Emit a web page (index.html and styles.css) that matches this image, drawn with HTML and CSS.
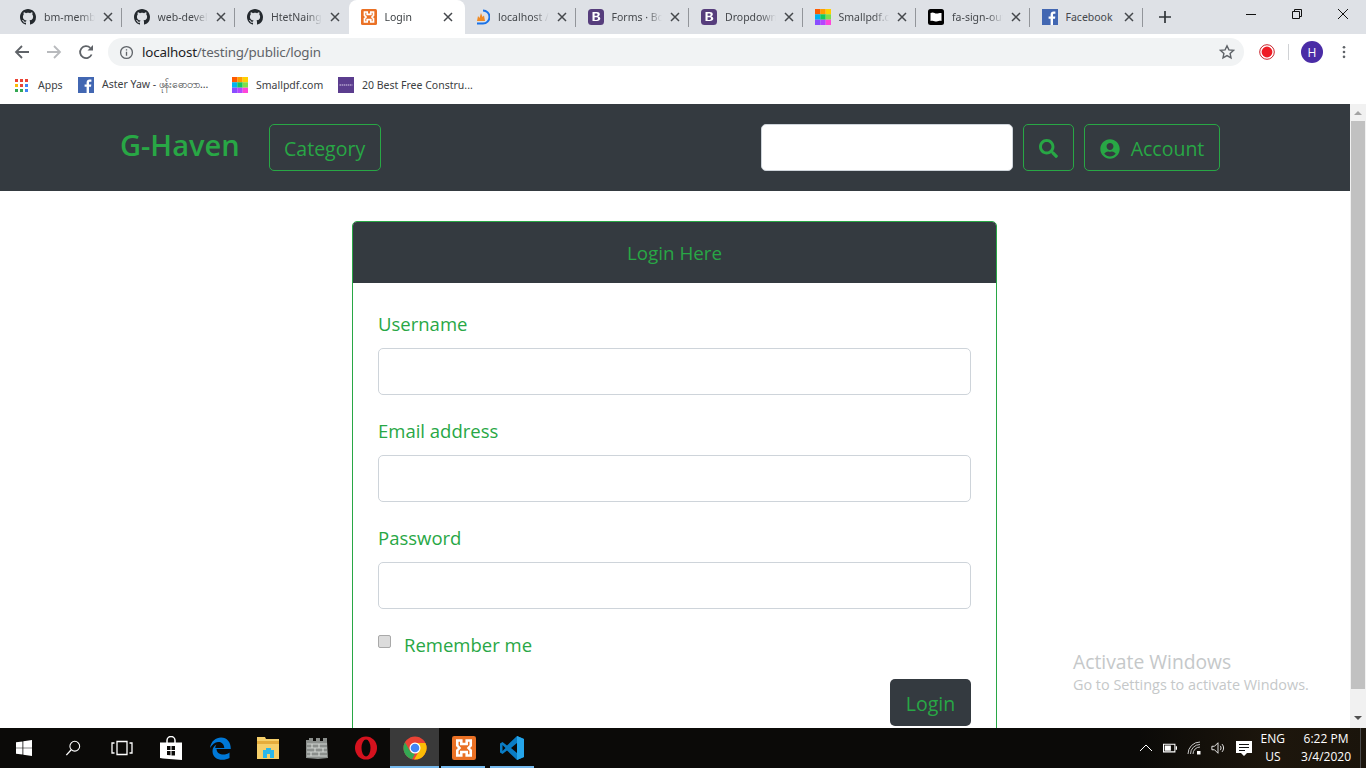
FILE: index.html
```html
<!DOCTYPE html>
<html lang="en">
<head>
<meta charset="utf-8">
<title>Login</title>
<link rel="stylesheet" href="styles.css">
</head>
<body>
<svg class="defs" width="0" height="0" aria-hidden="true">
  <defs>
    <symbol id="gh" viewBox="0 0 16 16"><path fill="#24292e" d="M8 0C3.58 0 0 3.58 0 8c0 3.54 2.29 6.53 5.47 7.59.4.07.55-.17.55-.38 0-.19-.01-.82-.01-1.49-2.01.37-2.53-.49-2.69-.94-.09-.23-.48-.94-.82-1.13-.28-.15-.68-.52-.01-.53.63-.01 1.08.58 1.23.82.72 1.21 1.87.87 2.33.66.07-.52.28-.87.51-1.07-1.78-.2-3.64-.89-3.64-3.95 0-.87.31-1.59.82-2.15-.08-.2-.36-1.02.08-2.12 0 0 .67-.21 2.2.82.64-.18 1.32-.27 2-.27.68 0 1.36.09 2 .27 1.53-1.04 2.2-.82 2.2-.82.44 1.1.16 1.92.08 2.12.51.56.82 1.27.82 2.15 0 3.07-1.87 3.75-3.65 3.95.29.25.54.73.54 1.48 0 1.07-.01 1.93-.01 2.2 0 .21.15.46.55.38A8.013 8.013 0 0016 8c0-4.42-3.58-8-8-8z"/></symbol>
    <symbol id="xampp" viewBox="0 0 16 16"><rect width="16" height="16" rx="1.500" fill="#ea7125"/><path fill="none" stroke="#fff" stroke-width="1.700" d="M3.500 3H6.200v2.300h3.600V3h2.700v3.400L11 8l1.500 1.600V13H9.800v-2.300H6.200V13H3.500V9.600L5 8 3.500 6.400z"/></symbol>
    <symbol id="boot" viewBox="0 0 16 16"><rect width="16" height="16" rx="3.500" fill="#563d7c"/><path fill="#fff" fill-rule="evenodd" d="M4.500 3h4.300c1.900 0 3 .9 3 2.300 0 1-.6 1.800-1.500 2v.1c1.200.2 2 1 2 2.200 0 1.600-1.300 2.500-3.300 2.500H4.500zm2.100 1.600v2.200h1.500c.9 0 1.500-.4 1.500-1.100s-.5-1.100-1.300-1.100zm0 3.700v2.600h1.800c1 0 1.600-.5 1.600-1.300s-.6-1.300-1.700-1.300z"/></symbol>
    <symbol id="pdf" viewBox="0 0 16 16"><rect width="5.400" height="5.400" fill="#ff5a00"/><rect x="5.300" width="5.400" height="5.400" fill="#ff9c00"/><rect x="10.700" width="5.300" height="5.400" fill="#ffd000"/><rect y="5.300" width="5.400" height="5.400" fill="#00b4f0"/><rect x="5.300" y="5.300" width="5.400" height="5.400" fill="#12c95e"/><rect x="10.700" y="5.300" width="5.300" height="5.400" fill="#7fe04a"/><rect y="10.700" width="5.400" height="5.300" fill="#8a4dff"/><rect x="5.300" y="10.700" width="5.400" height="5.300" fill="#b446ff"/><rect x="10.700" y="10.700" width="5.300" height="5.300" fill="#ff45d8"/></symbol>
    <symbol id="fb" viewBox="0 0 16 16"><rect width="16" height="16" fill="#4267b2"/><path fill="#fff" d="M11 16V9.800h2l.3-2.400H11V5.900c0-.7.200-1.200 1.200-1.200h1.200V2.600c-.2 0-1-.1-1.800-.1-1.800 0-3 1.100-3 3.100v1.800h-2v2.400h2V16z"/></symbol>
    <symbol id="x" viewBox="0 0 10 10"><path stroke="#45484c" stroke-width="1.500" d="M1 1l8 8M9 1L1 9"/></symbol>
  </defs>
</svg>

<div class="screen">
  <header class="tabstrip">
    <div class="tab"><svg class="fav"><use href="#gh"/></svg><span class="tab-title">bm-member</span><svg class="tab-x"><use href="#x"/></svg></div>
    <div class="tab"><svg class="fav"><use href="#gh"/></svg><span class="tab-title">web-develop</span><svg class="tab-x"><use href="#x"/></svg></div>
    <div class="tab tab-pre"><svg class="fav"><use href="#gh"/></svg><span class="tab-title">HtetNaingWin</span><svg class="tab-x"><use href="#x"/></svg></div>
    <div class="tab tab-active"><svg class="fav"><use href="#xampp"/></svg><span class="tab-title">Login</span><svg class="tab-x"><use href="#x"/></svg></div>
    <div class="tab"><svg class="fav" viewBox="0 0 16 16"><path fill="none" stroke="#1a73e8" stroke-width="2" d="M9 1.500a6.500 6.500 0 0 1 0 13H3"/><path fill="#f08a24" d="M3 12l1-5 1.500 2L7 4l1.500 4L10 6.500 11 12z"/></svg><span class="tab-title">localhost / 127</span><svg class="tab-x"><use href="#x"/></svg></div>
    <div class="tab"><svg class="fav"><use href="#boot"/></svg><span class="tab-title">Forms · Boot</span><svg class="tab-x"><use href="#x"/></svg></div>
    <div class="tab"><svg class="fav"><use href="#boot"/></svg><span class="tab-title">Dropdowns</span><svg class="tab-x"><use href="#x"/></svg></div>
    <div class="tab"><svg class="fav"><use href="#pdf"/></svg><span class="tab-title">Smallpdf.com</span><svg class="tab-x"><use href="#x"/></svg></div>
    <div class="tab"><svg class="fav" viewBox="0 0 16 16"><rect width="16" height="16" rx="2.500" fill="#000"/><path fill="#fff" d="M2.500 4c3-1.500 4 .5 6 .5s3-.7 5-.5v8c-2-.5-3 .5-5 .5s-3-1.500-6-.5z"/></svg><span class="tab-title">fa-sign-out-alt</span><svg class="tab-x"><use href="#x"/></svg></div>
    <div class="tab tab-last"><svg class="fav"><use href="#fb"/></svg><span class="tab-title tab-title-full">Facebook</span><svg class="tab-x"><use href="#x"/></svg></div>
    <svg class="newtab" viewBox="0 0 12 12"><path stroke="#303438" stroke-width="1.700" d="M6 0v12M0 6h12"/></svg>
    <div class="winctl">
      <svg class="win-ico" viewBox="0 0 10 10"><path stroke="#111" d="M0 5.500h10"/></svg>
      <svg class="win-ico" viewBox="0 0 10 10"><path fill="none" stroke="#111" d="M.5 2.500h7v7h-7zM2.500 2.500v-2h7v7h-2"/></svg>
      <svg class="win-ico" viewBox="0 0 10 10"><path stroke="#111" d="M0 0l10 10M10 0L0 10"/></svg>
    </div>
  </header>

  <div class="toolbar">
    <svg class="tb-ico" viewBox="0 0 16 16"><path fill="none" stroke="#5f6368" stroke-width="1.800" d="M15 8H2M8 2L2 8l6 6"/></svg>
    <svg class="tb-ico" viewBox="0 0 16 16"><path fill="none" stroke="#b8babd" stroke-width="1.800" d="M1 8h13M8 2l6 6-6 6"/></svg>
    <svg class="tb-ico" viewBox="0 0 16 16"><path fill="none" stroke="#5f6368" stroke-width="1.800" d="M13.600 10.500A6 6 0 1 1 12.300 3.800"/><path fill="#5f6368" d="M9.500 6.500H15V1z"/></svg>
    <div class="omnibox">
      <svg class="info" viewBox="0 0 16 16"><circle cx="8" cy="8" r="6.300" fill="none" stroke="#5f6368" stroke-width="1.400"/><path fill="#5f6368" d="M7.300 7.200h1.400v4.300H7.300zM7.300 4.500h1.400v1.400H7.300z"/></svg>
      <span class="url"><span class="url-host">localhost</span>/testing/public/login</span>
      <svg class="star" viewBox="0 0 16 16"><path fill="none" stroke="#5f6368" stroke-width="1.400" d="M8 1.800l1.900 4.100 4.500.5-3.300 3 .9 4.500L8 11.600l-4 2.300.9-4.500-3.300-3 4.500-.5z"/></svg>
    </div>
    <svg class="rec" viewBox="0 0 16 16"><circle cx="8" cy="8" r="7.300" fill="none" stroke="#c9252d" stroke-width="1"/><circle cx="8" cy="8" r="5.400" fill="#ee1c25"/></svg>
    <span class="tb-sep"></span>
    <span class="avatar">H</span>
    <svg class="kebab" viewBox="0 0 4 16"><circle cx="2" cy="2.500" r="1.500" fill="#5f6368"/><circle cx="2" cy="8" r="1.500" fill="#5f6368"/><circle cx="2" cy="13.500" r="1.500" fill="#5f6368"/></svg>
  </div>

  <div class="bookmarks">
    <span class="bm bm-apps"><svg class="bm-grid" viewBox="0 0 13 13"><g fill="#ea4335"><rect width="3" height="3"/><rect x="5" width="3" height="3"/><rect x="10" width="3" height="3"/></g><g fill="#fbbc05"><rect y="5" width="3" height="3"/></g><rect x="5" y="5" width="3" height="3" fill="#ea4335"/><rect x="10" y="5" width="3" height="3" fill="#4285f4"/><g fill="#34a853"><rect y="10" width="3" height="3"/><rect x="5" y="10" width="3" height="3"/></g><rect x="10" y="10" width="3" height="3" fill="#4285f4"/></svg>Apps</span>
    <span class="bm bm-aster"><svg class="fav"><use href="#fb"/></svg>Aster Yaw - ဖုန်းဓောတာ...</span>
    <span class="bm bm-pdf"><svg class="fav"><use href="#pdf"/></svg>Smallpdf.com</span>
    <span class="bm"><svg class="fav" viewBox="0 0 16 16"><rect width="16" height="16" fill="#5b3d8e"/><path stroke="#d9cdea" stroke-width="1.200" stroke-dasharray="1.500 .6" d="M1.500 8h13"/></svg>20 Best Free Constru...</span>
  </div>

  <div class="viewport">
    <main class="page">
      <nav class="navbar">
        <a class="brand">G-Haven</a>
        <button class="btn btn-cat" type="button">Category</button>
        <span class="nav-spacer"></span>
        <input class="nav-search" type="text">
        <button class="btn btn-search" type="button" aria-label="Search"><svg class="ico-search" viewBox="0 0 512 512"><path fill="#28a745" d="M505 442.700L405.300 343c-4.500-4.500-10.600-7-17-7H372c27.600-35.300 44-79.700 44-128C416 93.100 322.900 0 208 0S0 93.100 0 208s93.100 208 208 208c48.300 0 92.700-16.400 128-44v16.300c0 6.400 2.500 12.500 7 17l99.700 99.700c9.400 9.400 24.600 9.400 33.900 0l28.300-28.300c9.400-9.400 9.400-24.600.1-34zM208 336c-70.700 0-128-57.200-128-128 0-70.700 57.200-128 128-128 70.700 0 128 57.200 128 128 0 70.700-57.200 128-128 128z"/></svg></button>
        <button class="btn btn-account" type="button"><svg class="ico-user" viewBox="0 0 496 512"><path fill="#28a745" d="M248 8C111 8 0 119 0 256s111 248 248 248 248-111 248-248S385 8 248 8zm0 96c48.600 0 88 39.400 88 88s-39.400 88-88 88-88-39.400-88-88 39.400-88 88-88zm0 344c-58.700 0-111.300-26.600-146.500-68.200 18.800-35.400 55.600-59.800 98.500-59.800 2.400 0 4.800.4 7.100 1.100 13 4.200 26.600 6.900 40.900 6.900 14.300 0 28-2.700 40.900-6.900 2.300-.7 4.700-1.100 7.100-1.100 42.900 0 79.700 24.400 98.500 59.800C359.300 421.400 306.700 448 248 448z"/></svg>Account</button>
      </nav>

      <section class="card">
        <h2 class="card-head">Login Here</h2>
        <form class="card-body">
          <div class="field"><label class="field-label">Username</label><input class="field-input" type="text"></div>
          <div class="field"><label class="field-label">Email address</label><input class="field-input" type="email"></div>
          <div class="field"><label class="field-label">Password</label><input class="field-input" type="password"></div>
          <div class="remember"><input class="check" type="checkbox"><label class="field-label">Remember me</label></div>
          <div class="actions"><button class="btn-login" type="button">Login</button></div>
        </form>
      </section>
    </main>
    <div class="scrollbar"><span class="sb-up"></span><span class="sb-thumb"></span><span class="sb-down"></span></div>
    <div class="watermark"><div class="wm-1">Activate Windows</div><div class="wm-2">Go to Settings to activate Windows.</div></div>
  </div>

  <footer class="taskbar">
    <span class="tb-item"><svg class="task-ico" viewBox="0 0 18 18"><path fill="#fff" d="M0 2.600l7.300-1v7H0zM8.200 1.400L18 0v8.600H8.200zM0 9.400h7.300v7l-7.300-1zM8.200 9.400H18V18l-9.800-1.400z"/></svg></span>
    <span class="tb-item"><svg class="task-ico" viewBox="0 0 18 18"><circle cx="11" cy="7" r="5.500" fill="none" stroke="#fff" stroke-width="1.200"/><path stroke="#fff" stroke-width="1.500" d="M7 11l-5.500 6"/></svg></span>
    <span class="tb-item"><svg class="task-ico task-wide" viewBox="0 0 22 16"><path fill="none" stroke="#fff" stroke-width="1.300" d="M6 1.500h10v13H6zM3.500 3H1v10h2.500M18.500 3H21v10h-2.500"/></svg></span>
    <span class="tb-item"><svg class="task-ico task-lg" viewBox="0 0 22 24"><path fill="none" stroke="#fff" stroke-width="1.500" d="M7 7V4.500a4 4 0 0 1 8 0V7"/><path fill="#fff" fill-rule="evenodd" d="M0 6.500h22v17.500L3 22.500 0 22zM7 10v4h3.500v-4zm4.500 0v4H15v-4zM7 15v4l3.500.3V15zm4.500 0v4.400l3.500.2V15z"/></svg></span>
    <span class="tb-item"><svg class="task-ico task-lg" viewBox="0 0 24 24"><path fill="#0078d7" d="M2 12C3 5 8 1.500 13 1.500c6 0 9.800 4.500 9.800 11.500H8.500c.3 6 8.500 7 13 3.500v5.500c-6 3.500-17 2.500-17-7 0-3 1.500-5 4-6.500-1 1.500-1.200 2.500-1.200 3.500h9C16 8 13.500 5.500 10 6 7 6.400 4 8.500 2 12z"/></svg></span>
    <span class="tb-item"><svg class="task-ico task-lg" viewBox="0 0 24 22"><path fill="#f6cf6a" d="M1 0h8l1 2h13v20H1z"/><path fill="#e6ad3c" d="M1 4h22v3H1z"/><path fill="#2bb7ea" d="M7 21v-8h3v-2h5v2h3v8h-4v-4h-3v4z"/></svg></span>
    <span class="tb-item"><svg class="task-ico task-lg" viewBox="0 0 24 22"><path fill="#8b8f8c" d="M1 3h3V1h4v3h3V1h4v3h3V1h4v3l1 17-10 1-12-1z"/><path stroke="#d0d4d0" stroke-width="1.200" fill="none" d="M2 7h20M2 11h20M2 15h20M2 19h20M7 7v4M14 7v4M10 11v4M18 11v4M6 15v4M14 15v4"/></svg></span>
    <span class="tb-item"><svg class="task-ico task-lg" viewBox="0 0 24 24"><ellipse cx="12" cy="12" rx="11" ry="11.500" fill="#d5121e"/><ellipse cx="12" cy="12" rx="4.500" ry="8.500" fill="#0a0a08"/></svg></span>
    <span class="tb-item tb-active"><svg class="task-ico task-lg" viewBox="0 0 24 24"><circle cx="12" cy="12" r="11.500" fill="#ea4335"/><path fill="#34a853" d="M2 6.300l5.700 10L12 18l-3 5.200A11.500 11.500 0 0 1 2 6.300z"/><path fill="#fbbc05" d="M12 7h10.400a11.500 11.500 0 0 1-11.300 16.500l5.800-10z"/><circle cx="12" cy="12" r="5.500" fill="#fff"/><circle cx="12" cy="12" r="4.300" fill="#4285f4"/></svg></span>
    <span class="tb-item tb-open"><svg class="task-ico task-lg" viewBox="0 0 16 16"><use href="#xampp"/></svg></span>
    <span class="tb-item tb-open"><svg class="task-ico task-lg" viewBox="0 0 24 24"><path fill="#0a7cc4" d="M17 0L7 9.500 2.500 6 0 7.500v9L2.500 18 7 14.500 17 24l7-3V3zM2.500 9l3 3-3 3zM17 7v10l-6-5z"/><path fill="#25a5ea" d="M17 0l7 3v18l-7 3z"/></svg></span>
    <span class="tray">
      <svg class="tray-ico" viewBox="0 0 14 8"><path fill="none" stroke="#fff" d="M1 7l6-6 6 6"/></svg>
      <svg class="tray-ico" viewBox="0 0 16 10"><path fill="none" stroke="#fff" stroke-width="1.200" d="M.6.600h13v8.800H.6z"/><path fill="#fff" d="M2 2h7v6H2zM14.500 3H16v4h-1.500z"/></svg>
      <svg class="tray-ico" viewBox="0 0 14 14"><g fill="none" stroke="#c9c9c9"><path d="M1 13A12 12 0 0 1 13 1M3.500 13A9.500 9.500 0 0 1 13 3.500M6 13a7 7 0 0 1 7-7"/></g><path fill="#fff" d="M10 10h3.500v3.500H10z"/></svg>
      <svg class="tray-ico" viewBox="0 0 16 14"><path fill="none" stroke="#fff" d="M1 5h3l4-4v12L4 9H1zM10.500 4.500c1.300 1.500 1.300 3.500 0 5M12.500 2.500c2.500 2.500 2.500 6.500 0 9"/></svg>
      <svg class="tray-note" viewBox="0 0 16 15"><path fill="#fff" d="M0 0h16v12h-5l-3 3-3-3H0z"/><path stroke="#111" d="M3 3.500h10M3 6.500h10M3 9.500h6"/></svg>
      <span class="tray-lang">ENG<br>US</span>
      <span class="tray-clock">6:22 PM<br>3/4/2020</span>
      <span class="show-desktop"></span>
    </span>
  </footer>
</div>
</body>
</html>
```

FILE: styles.css
```css
* { box-sizing: border-box; }
html, body { margin: 0; padding: 0; height: 100%; overflow: hidden; background: #fff; }
body { font-family: "Open Sans", "Noto Sans", sans-serif; }
.defs { position: absolute; }

.screen { width: 1366px; height: 768px; display: flex; flex-direction: column; overflow: hidden; }

/* tab strip */
.tabstrip { height: 34px; flex: none; background: #dee1e6; display: flex; align-items: stretch; padding-left: 8px; }
.tab { width: 113.500px; flex: none; display: flex; align-items: center; padding: 0 9px 0 12px; gap: 8px; position: relative; font-family: "Noto Sans", sans-serif; font-size: 10.500px; color: #45484c; }
.tab::after { content: ""; position: absolute; right: 0; top: 8px; height: 19px; width: 1px; background: #92959a; }
.tab-pre::after, .tab-active::after { display: none; }
.tab-active { background: #fff; border-radius: 8px 8px 0 0; color: #3c4043; box-shadow: 3px 0 0 #fff; }
.fav { width: 16px; height: 16px; flex: none; }
.tab-title { flex: 1; min-width: 0; white-space: nowrap; overflow: hidden; -webkit-mask-image: linear-gradient(to right, #000 70%, transparent 100%); mask-image: linear-gradient(to right, #000 70%, transparent 100%); }
.tab-title-full { -webkit-mask-image: none; mask-image: none; }
.tab-x { width: 10px; height: 10px; flex: none; }
.newtab { width: 12px; height: 12px; margin: 11px 0 0 15.500px; flex: none; }
.winctl { margin-left: auto; display: flex; align-items: flex-start; padding: 9px 18px 0 0; gap: 36px; }
.win-ico { width: 10px; height: 10px; flex: none; }

/* toolbar */
.toolbar { height: 36px; flex: none; background: #fff; display: flex; align-items: center; padding: 0 13px 0 14px; }
.tb-ico { width: 16px; height: 16px; flex: none; margin-right: 16px; }
.omnibox { flex: none; width: 1136px; height: 28px; margin-left: -2px; border-radius: 14px; background: #f1f3f4; display: flex; align-items: center; padding: 0 9px 0 11px; }
.info { width: 15px; height: 15px; flex: none; }
.url { margin-left: 8px; font-size: 13.400px; color: #5f6368; font-family: "Noto Sans", sans-serif; letter-spacing: -.2px; }
.url-host { color: #202124; }
.star { width: 16px; height: 16px; flex: none; margin-left: auto; }
.rec { width: 16px; height: 16px; flex: none; margin-left: 15px; }
.tb-sep { width: 1px; height: 16px; background: #d0d2d5; margin: 0 12px 0 13px; flex: none; }
.avatar { width: 22px; height: 22px; border-radius: 50%; background: #4a2ca6; color: #fff; font-size: 12px; display: flex; align-items: center; justify-content: center; flex: none; }
.kebab { width: 4px; height: 14px; flex: none; margin-left: 19px; }

/* bookmarks */
.bookmarks { height: 34px; flex: none; background: #fff; display: flex; align-items: center; padding: 0 0 4px 15px; font-family: "Noto Sans", "Noto Sans CJK SC", sans-serif; font-size: 10.500px; color: #3c4043; }
.bm { display: inline-flex; align-items: center; gap: 8px; white-space: nowrap; flex: none; }
.bm-apps { gap: 10px; width: 63px; }
.bm-aster { width: 154px; }
.bm-pdf { width: 106px; }
.bm-grid { width: 13px; height: 13px; flex: none; }

/* viewport */
.viewport { height: 624px; flex: none; display: flex; position: relative; overflow: hidden; }
.page { flex: 1; min-width: 0; background: #fff; overflow: hidden; }
.scrollbar { width: 16px; flex: none; background: #f1f1f1; display: flex; flex-direction: column; align-items: center; }
.sb-up, .sb-down { width: 0; height: 0; flex: none; border-left: 4px solid transparent; border-right: 4px solid transparent; }
.sb-up { border-bottom: 4px solid #a3a3a3; margin: 7px 0 6px; }
.sb-down { border-top: 4px solid #505050; margin: 0 0 8px; }
.sb-thumb { flex: 1; width: 14px; background: #c1c1c1; margin-bottom: 27px; }

/* navbar */
.navbar { height: 87px; background: #343a40; display: flex; align-items: center; padding: 0 130px 0 120px; }
.brand { font-size: 29px; font-weight: 600; color: #28a745; line-height: 1; margin-top: -6px; }
.nav-spacer { flex: 1; }
.btn { height: 47px; border: 1px solid #28a745; background: transparent; border-radius: 5px; color: #28a745; font-family: inherit; font-size: 19.500px; padding: 2px 0 0; margin: 0; display: inline-flex; align-items: center; justify-content: center; }
.btn-cat { width: 112px; margin-left: 29px; }
.nav-search { width: 252px; height: 47px; border: 1px solid #ced4da; border-radius: 5px; background: #fff; padding: 0; margin: 0; }
.btn-search { width: 51px; margin-left: 10px; }
.ico-search { width: 19px; height: 19px; }
.btn-account { width: 136px; margin-left: 10px; gap: 11px; }
.ico-user { width: 20px; height: 20px; flex: none; }

/* card */
.card { width: 645px; margin: 30px 0 0 352px; border: 1px solid #28a745; border-radius: 5px; color: #28a745; }
.card-head { margin: 0; height: 61px; background: #343a40; border-radius: 4px 4px 0 0; display: flex; align-items: center; justify-content: center; font-size: 18.800px; font-weight: 400; }
.card-body { padding: 26px 25px 30px; display: flex; flex-direction: column; }
.field { margin-bottom: 21px; display: flex; flex-direction: column; }
.field-label { font-size: 18.500px; line-height: 30px; height: 30px; margin-bottom: 9px; }
.field-input { height: 47px; border: 1px solid #ced4da; border-radius: 5px; background: #fff; }
.remember { display: flex; align-items: flex-start; height: 38px; margin-bottom: 11px; }
.check { appearance: none; -webkit-appearance: none; width: 13px; height: 13px; margin: 5px 13px 0 0; flex: none; background: #dcdcdc; border: 1px solid #a9a9a9; border-radius: 2px; }
.actions { display: flex; justify-content: flex-end; }
.btn-login { width: 81px; height: 47px; border: 0; border-radius: 5px; background: #343a40; color: #28a745; font-family: inherit; font-size: 19.500px; padding: 2px 0 0; }

/* watermark */
.watermark { position: absolute; left: 1073px; top: 545px; color: #c5c8c9; pointer-events: none; }
.wm-1 { font-size: 19.300px; line-height: 26px; }
.wm-2 { font-size: 14.400px; line-height: 20px; }

/* taskbar */
.taskbar { height: 40px; flex: none; background: #0b0a08; display: flex; align-items: stretch; }
.tb-item { width: 48.800px; flex: none; display: flex; align-items: center; justify-content: center; position: relative; }
.tb-active { background: #3a3a3a; }
.tb-active::after, .tb-open::after { content: ""; position: absolute; bottom: 0; left: 0; right: 0; height: 2px; background: #76b9ed; }
.tb-open::after { left: 2px; right: 3px; }
.task-ico { width: 16px; height: 18px; }
.task-wide { width: 22px; height: 16px; }
.task-lg { width: 24px; height: 24px; }
.tray { margin-left: auto; display: flex; align-items: center; gap: 10px; color: #fff; font-size: 12px; background: linear-gradient(to right, #0b0a08, #1d160c 60%, #1a140b); }
.tray-ico { width: 14px; height: 14px; flex: none; }
.tray-note { width: 16px; height: 15px; flex: none; margin-left: 1px; }
.tray-lang { text-align: center; line-height: 18px; margin-left: -1px; }
.tray-clock { text-align: center; line-height: 18px; margin-left: 6px; }
.show-desktop { width: 6px; align-self: stretch; border-left: 1px solid #4a4a4a; margin-left: -1px; }
```
